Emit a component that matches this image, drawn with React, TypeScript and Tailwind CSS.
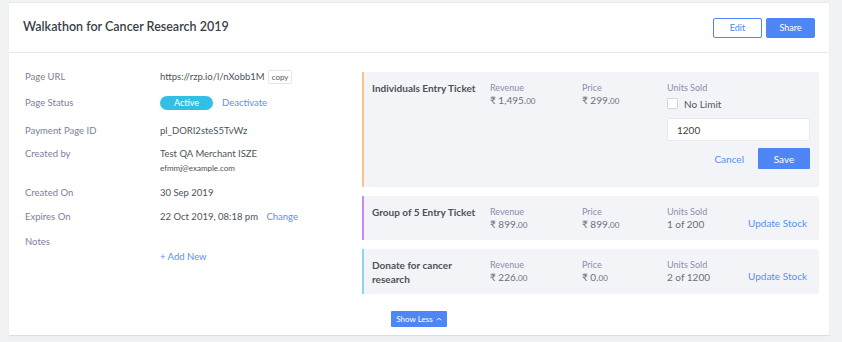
import React from "react";

const Money = ({ main, cents }: { main: string; cents: string }) => (
  <span>
    ₹ {main}
    <span className="text-[8px]">{cents}</span>
  </span>
);

function Ticket({
  title,
  border,
  revenue,
  price,
  units,
  twoLine,
}: {
  title: string;
  border: string;
  revenue: [string, string];
  price: [string, string];
  units: string;
  twoLine?: boolean;
}) {
  return (
    <div
      className={`flex rounded-r-[3px] bg-[#f2f4f8] border-l-2 ${border} pl-[8px] pr-[12px] pt-[10px] ${twoLine ? "pb-[8px]" : "pb-[9px]"}`}
    >
      <div className="w-[118px] -mt-px text-[10px] leading-[14px] font-bold text-[#4c5158] pr-[14px]">{title}</div>
      <div className="w-[92px] leading-[12px]">
        <div className="text-[9px] text-[#8a8fac]">Revenue</div>
        <div className="text-[#6b7078] text-[10px]">
          <Money main={revenue[0]} cents={revenue[1]} />
        </div>
      </div>
      <div className="w-[85px] leading-[12px]">
        <div className="text-[9px] text-[#8a8fac]">Price</div>
        <div className="text-[#6b7078] text-[10px]">
          <Money main={price[0]} cents={price[1]} />
        </div>
      </div>
      <div className="flex-1 leading-[12px]">
        <div className="text-[9px] text-[#8a8fac]">Units Sold</div>
        <div className="text-[#6b7078] text-[10px]">{units}</div>
      </div>
      <div className="pt-[11px] text-[10px] leading-[12px] text-[#5a8ff0]">Update Stock</div>
    </div>
  );
}

export default function App() {
  const font = { fontFamily: "Lato, 'Open Sans', sans-serif" };
  return (
    <div style={font} className="w-[842px] h-[342px] bg-[#f1f2f4] pl-[9px] pr-[13px] pt-[2px]">
      <div className="bg-white h-[333px] border-t border-[#e4e8ea] shadow-[0_1px_1px_rgba(0,0,0,0.08)] flex flex-col">
        {/* Header */}
        <div className="h-[50px] flex items-center justify-between pl-[14px] pr-[14px] border-b border-[#e6e9ec]">
          <div className="text-[12.5px] font-semibold text-[#393e46]">Walkathon for Cancer Research 2019</div>
          <div className="flex gap-[4px]">
            <button className="w-[49px] h-[20px] border border-[#4f86f6] rounded-[2px] text-[9px] text-[#4f86f6] bg-white">Edit</button>
            <button className="w-[49px] h-[20px] rounded-[2px] text-[9px] text-white bg-[#4f86f6]">Share</button>
          </div>
        </div>

        {/* Body */}
        <div className="flex">
          {/* Left */}
          <div className="w-[353px] pl-[16px] pt-[14px] text-[9.5px] leading-[20px]">
            <div className="flex">
              <div className="w-[135px] text-[#7b809c]">Page URL</div>
              <div className="flex items-center text-[#4e535b]">
                https://rzp.io/l/nXobb1M
                <span className="ml-[3px] h-[14px] px-[3px] leading-[13px] border border-[#e2e4e8] rounded-[2px] text-[8px] text-[#555]">copy</span>
              </div>
            </div>
            <div className="flex mt-[6px]">
              <div className="w-[135px] text-[#7b809c]">Page Status</div>
              <div className="flex items-center">
                <span className="w-[53px] h-[14px] rounded-full bg-[#33bfe3] text-white text-[9px] leading-[14px] text-center">Active</span>
                <span className="ml-[9px] text-[#5a8ff0]">Deactivate</span>
              </div>
            </div>
            <div className="flex mt-[8px]">
              <div className="w-[135px] text-[#7b809c]">Payment Page ID</div>
              <div className="text-[#4e535b]">pl_DORI2steS5TvWz</div>
            </div>
            <div className="flex mt-[3px]">
              <div className="w-[135px] text-[#7b809c]">Created by</div>
              <div className="text-[#4e535b]">
                <div>Test QA Merchant ISZE</div>
                <div className="text-[8px] leading-[8px]">efmmj@example.com</div>
              </div>
            </div>
            <div className="flex mt-[11px]">
              <div className="w-[135px] text-[#7b809c]">Created On</div>
              <div className="text-[#4e535b]">30 Sep 2019</div>
            </div>
            <div className="flex mt-[4px]">
              <div className="w-[135px] text-[#7b809c]">Expires On</div>
              <div className="text-[#4e535b]">
                22 Oct 2019, 08:18 pm <span className="ml-[6px] text-[#5a8ff0]">Change</span>
              </div>
            </div>
            <div className="flex mt-[5px]">
              <div className="w-[135px] text-[#7b809c]">Notes</div>
              <div className="pt-[15px] text-[#5a8ff0]">+ Add New</div>
            </div>
          </div>

          {/* Right */}
          <div className="w-[457px] pt-[19px] flex flex-col gap-[9px]">
            <div className="flex rounded-r-[3px] bg-[#f2f4f8] border-l-2 border-[#fdc28a] pl-[8px] pr-[9px] pt-[10px] pb-[18px]">
              <div className="w-[118px] -mt-px text-[10px] leading-[14px] font-bold text-[#4c5158]">Individuals Entry Ticket</div>
              <div className="w-[92px] leading-[12px]">
                <div className="text-[9px] text-[#8a8fac]">Revenue</div>
                <div className="text-[#6b7078] text-[10px]">
                  <Money main="1,495." cents="00" />
                </div>
              </div>
              <div className="w-[85px] leading-[12px]">
                <div className="text-[9px] text-[#8a8fac]">Price</div>
                <div className="text-[#6b7078] text-[10px]">
                  <Money main="299." cents="00" />
                </div>
              </div>
              <div className="flex-1 leading-[12px]">
                <div className="text-[9px] text-[#8a8fac]">Units Sold</div>
                <div className="flex items-center mt-[1px] h-[17px]">
                  <span className="w-[11px] h-[11px] bg-white border border-[#d5d8de] rounded-[1px]" />
                  <span className="ml-[6px] text-[10px] text-[#525760]">No Limit</span>
                </div>
                <div className="mt-[6px] h-[23px] bg-white border border-[#e8eaee] rounded-[2px] pl-[9px] flex items-center text-[10px] text-[#444]">1200</div>
                <div className="mt-[7px] flex items-center justify-end">
                  <span className="text-[10px] text-[#5a8ff0] mr-[14px]">Cancel</span>
                  <button className="w-[52px] h-[21px] bg-[#4f86f6] text-white text-[10px] rounded-[1px]">Save</button>
                </div>
              </div>
            </div>
            <Ticket
              title="Group of 5 Entry Ticket"
              border="border-[#c98af6]"
              revenue={["899.", "00"]}
              price={["899.", "00"]}
              units="1 of 200"
            />
            <Ticket
              title="Donate for cancer research"
              border="border-[#8dd4f7]"
              revenue={["226.", "00"]}
              price={["0.", "00"]}
              units="2 of 1200"
              twoLine
            />
          </div>
        </div>

        <div className="flex justify-center mt-[17px]">
          <button className="w-[56px] h-[16px] bg-[#4f86f6] text-white text-[8px] rounded-[1px] flex items-center justify-center gap-[3px]">
            Show Less
            <svg width="6" height="4" viewBox="0 0 6 4" fill="none" stroke="white" strokeWidth="1">
              <path d="M1 3.2 L3 1.2 L5 3.2" />
            </svg>
          </button>
        </div>
      </div>
    </div>
  );
}
